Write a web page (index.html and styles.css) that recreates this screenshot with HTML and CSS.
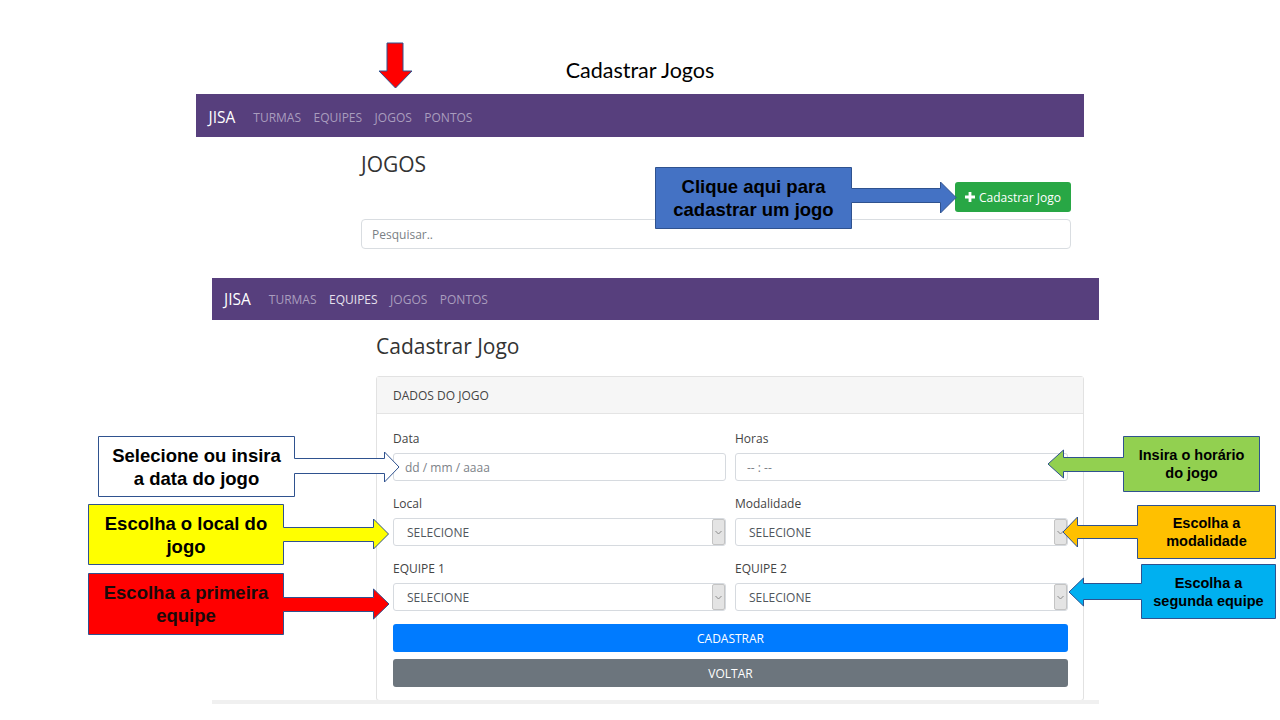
FILE: index.html
```html
<!DOCTYPE html>
<html lang="pt-BR">
<head>
<meta charset="utf-8">
<title>Cadastrar Jogos</title>
<link rel="stylesheet" href="styles.css">
</head>
<body>
<div class="slide">
  <div class="slide-title">Cadastrar Jogos</div>

  <section class="shot shot-list">
    <nav class="navbar navbar-1">
      <span class="brand">JISA</span>
      <span class="nav-link">TURMAS</span>
      <span class="nav-link">EQUIPES</span>
      <span class="nav-link">JOGOS</span>
      <span class="nav-link">PONTOS</span>
    </nav>
    <div class="container list-container">
      <h1 class="page-h">JOGOS</h1>
      <div class="btn-row">
        <span class="btn-success">
          <svg class="plus" width="10" height="10" viewBox="0 0 10 10"><path d="M3.6 0h2.8v3.6H10v2.8H6.4V10H3.6V6.4H0V3.6h3.6z" fill="#fff"/></svg>
          Cadastrar Jogo
        </span>
      </div>
      <div class="search">Pesquisar..</div>
    </div>
  </section>

  <section class="shot shot-form">
    <nav class="navbar navbar-2">
      <span class="brand">JISA</span>
      <span class="nav-link">TURMAS</span>
      <span class="nav-link active">EQUIPES</span>
      <span class="nav-link">JOGOS</span>
      <span class="nav-link">PONTOS</span>
    </nav>
    <div class="container form-container">
      <h1 class="page-h form-h">Cadastrar Jogo</h1>
      <div class="card">
        <div class="card-header">DADOS DO JOGO</div>
        <div class="card-body">
          <div class="form-grid">
            <div class="field">
              <div class="label">Data</div>
              <div class="control placeholder">dd / mm / aaaa</div>
            </div>
            <div class="field">
              <div class="label">Horas</div>
              <div class="control placeholder">-- : --</div>
            </div>
            <div class="field">
              <div class="label">Local</div>
              <div class="control select"><span>SELECIONE</span><span class="caret"><svg width="7" height="5" viewBox="0 0 7 5"><polyline points="0.5,1 3.5,4 6.5,1" fill="none" stroke="#8a8a8a" stroke-width="1"/></svg></span></div>
            </div>
            <div class="field">
              <div class="label">Modalidade</div>
              <div class="control select"><span>SELECIONE</span><span class="caret"><svg width="7" height="5" viewBox="0 0 7 5"><polyline points="0.5,1 3.5,4 6.5,1" fill="none" stroke="#8a8a8a" stroke-width="1"/></svg></span></div>
            </div>
            <div class="field">
              <div class="label">EQUIPE 1</div>
              <div class="control select"><span>SELECIONE</span><span class="caret"><svg width="7" height="5" viewBox="0 0 7 5"><polyline points="0.5,1 3.5,4 6.5,1" fill="none" stroke="#8a8a8a" stroke-width="1"/></svg></span></div>
            </div>
            <div class="field">
              <div class="label">EQUIPE 2</div>
              <div class="control select"><span>SELECIONE</span><span class="caret"><svg width="7" height="5" viewBox="0 0 7 5"><polyline points="0.5,1 3.5,4 6.5,1" fill="none" stroke="#8a8a8a" stroke-width="1"/></svg></span></div>
            </div>
          </div>
          <div class="btn btn-primary">CADASTRAR</div>
          <div class="btn btn-secondary">VOLTAR</div>
        </div>
      </div>
    </div>
    <div class="bottom-strip"></div>
  </section>

  <svg class="shapes" width="1280" height="720" viewBox="0 0 1280 720">
    <g stroke="#2f528f" stroke-width="1" stroke-linejoin="miter">
      <polygon points="387,43 403,43 403,71 412,71 395.5,88 379,71 387,71" fill="#ff0000"/>
      <polygon points="655.5,167.5 851.5,167.5 851.5,188.5 940.5,188.5 940.5,182 956,197.5 940.5,213 940.5,202.5 851.5,202.5 851.5,228.5 655.5,228.5" fill="#4472c4"/>
      <polygon points="98.5,436.5 294.5,436.5 294.5,458.5 384.5,458.5 384.5,452 399,467 384.5,482 384.5,473.5 294.5,473.5 294.5,496.5 98.5,496.5" fill="#ffffff"/>
      <polygon points="88.5,504.5 283.5,504.5 283.5,527.5 373.5,527.5 373.5,519 388.5,534 373.5,549 373.5,541.5 283.5,541.5 283.5,564.5 88.5,564.5" fill="#ffff00"/>
      <polygon points="88.5,573.5 283.5,573.5 283.5,597.5 373.5,597.5 373.5,589 389,604 373.5,619 373.5,611.5 283.5,611.5 283.5,634.5 88.5,634.5" fill="#ff0000"/>
      <polygon points="1259.5,436.5 1123.5,436.5 1123.5,457.5 1063.5,457.5 1063.5,450 1048,464 1063.5,478 1063.5,471.5 1123.5,471.5 1123.5,491.5 1259.5,491.5" fill="#92d050"/>
      <polygon points="1275.5,505.5 1137.5,505.5 1137.5,525.5 1077.5,525.5 1077.5,517 1063,532 1077.5,547 1077.5,538.5 1137.5,538.5 1137.5,558.5 1275.5,558.5" fill="#ffc000"/>
      <polygon points="1275.5,564.5 1141.5,564.5 1141.5,583.5 1083.5,583.5 1083.5,578 1069,592 1083.5,606 1083.5,599.5 1141.5,599.5 1141.5,618.5 1275.5,618.5" fill="#00b0f0"/>
    </g>
  </svg>

  <div class="note note-lg note-blue">Clique aqui para<br>cadastrar um jogo</div>
  <div class="note note-lg note-white">Selecione ou insira<br>a data do jogo</div>
  <div class="note note-lg note-yellow">Escolha o local do<br>jogo</div>
  <div class="note note-lg note-red">Escolha a primeira<br>equipe</div>
  <div class="note note-sm note-green">Insira o horário<br>do jogo</div>
  <div class="note note-sm note-orange">Escolha a<br>modalidade</div>
  <div class="note note-sm note-cyan">Escolha a<br>segunda equipe</div>
</div>
</body>
</html>
```

FILE: styles.css
```css
* { box-sizing: border-box; }
html, body { margin: 0; padding: 0; background: #ffffff; }

.slide {
  position: relative;
  width: 1280px;
  height: 720px;
  overflow: hidden;
  background: #ffffff;
  font-family: "Open Sans", "Noto Sans", sans-serif;
}

.slide-title {
  position: absolute;
  left: 0;
  top: 56px;
  width: 1280px;
  text-align: center;
  font-family: Lato, "Open Sans", sans-serif;
  font-size: 21.5px;
  line-height: 28px;
  color: #000;
}

/* screenshot panels placed on the slide canvas */
.shot {
  position: absolute;
  background: #fff;
}
.shot-list { left: 196px; top: 94px; width: 888px; }
.shot-form { left: 212px; top: 278px; width: 887px; height: 426px; overflow: hidden; }

.navbar {
  display: flex;
  align-items: center;
  height: 43px;
  padding: 0 12px;
  background: #573f7d;
}
.navbar-1 { padding-top: 3px; padding-left: 12.5px; }
.navbar-2 { height: 42px; }
.brand {
  font-size: 15.5px;
  color: #fff;
  margin-right: 18px;
}
.nav-link {
  font-size: 12px;
  color: #a99dbe;
  margin-right: 12.5px;
}
.nav-link.active { color: #e6e1ee; }

.container { display: flex; flex-direction: column; }
.list-container { padding: 13px 13px 0 165px; }
.form-container { padding: 12px 15px 0 164px; }

.page-h {
  margin: 0;
  font-size: 21px;
  line-height: 28px;
  font-weight: 400;
  color: #333;
}
.form-h { margin-bottom: 16px; }

.btn-row {
  display: flex;
  justify-content: flex-end;
  margin-top: 4px;
}
.btn-success {
  display: flex;
  align-items: center;
  gap: 4px;
  height: 30px;
  padding: 0 10px;
  background: #28a745;
  border-radius: 3px;
  color: #fff;
  font-size: 12px;
}
.search {
  margin-top: 7px;
  height: 30px;
  border: 1px solid #d9dde1;
  border-radius: 4px;
  padding: 0 10px;
  display: flex;
  align-items: center;
  font-size: 12px;
  color: #7a7f85;
}

.card {
  border: 1px solid #e2e2e2;
  border-radius: 3px;
  width: 708px;
}
.card-header {
  height: 37px;
  display: flex;
  align-items: center;
  padding: 0 16px;
  background: #f6f6f6;
  border-bottom: 1px solid #e4e4e4;
  font-size: 12px;
  color: #444;
}
.card-body {
  padding: 16px 15px 13px 16px;
  display: flex;
  flex-direction: column;
  gap: 7px;
}
.form-grid {
  display: grid;
  grid-template-columns: 1fr 1fr;
  column-gap: 9px;
  row-gap: 14px;
  margin-bottom: 6px;
}
.label {
  font-size: 12px;
  line-height: 18px;
  color: #444;
  margin-bottom: 5px;
}
.control {
  height: 28px;
  border: 1px solid #d6dadf;
  border-radius: 3px;
  display: flex;
  align-items: center;
  padding-left: 11px;
  font-size: 12px;
  color: #555;
}
.placeholder { color: #7d8288; }
.select {
  justify-content: space-between;
  padding-left: 13px;
  color: #50565c;
}
.caret {
  align-self: stretch;
  width: 13px;
  background: #e4e4e4;
  border: 1px solid #c4c4c4;
  border-radius: 2px;
  display: flex;
  align-items: center;
  justify-content: center;
}

.btn {
  height: 28px;
  border-radius: 3px;
  display: flex;
  align-items: center;
  justify-content: center;
  font-size: 12px;
  color: #fff;
}
.btn-primary { background: #007bff; }
.btn-secondary { background: #6c757d; }

.bottom-strip {
  position: absolute;
  left: 0;
  right: 0;
  bottom: 0;
  height: 4px;
  background: #f0f0f0;
}

/* slide annotations (arrows + callouts) */
.shapes {
  position: absolute;
  left: 0;
  top: 0;
  pointer-events: none;
}
.note {
  position: absolute;
  display: flex;
  align-items: center;
  justify-content: center;
  text-align: center;
  font-family: "Liberation Sans", Arial, sans-serif;
  font-weight: 700;
  color: #000;
}
.note-lg { font-size: 18.5px; line-height: 23px; }
.note-sm { font-size: 14.5px; line-height: 18px; }

.note-blue   { left: 656px;  top: 168px; width: 195px; height: 60px; }
.note-white  { left: 99px;   top: 437px; width: 195px; height: 59px; }
.note-yellow { left: 89px;   top: 505px; width: 194px; height: 59px; }
.note-red    { left: 89px;   top: 574px; width: 194px; height: 60px; color: #1a0a0a; }
.note-green  { left: 1124px; top: 437px; width: 135px; height: 54px; }
.note-orange { left: 1138px; top: 506px; width: 137px; height: 52px; }
.note-cyan   { left: 1142px; top: 565px; width: 133px; height: 53px; }
```
